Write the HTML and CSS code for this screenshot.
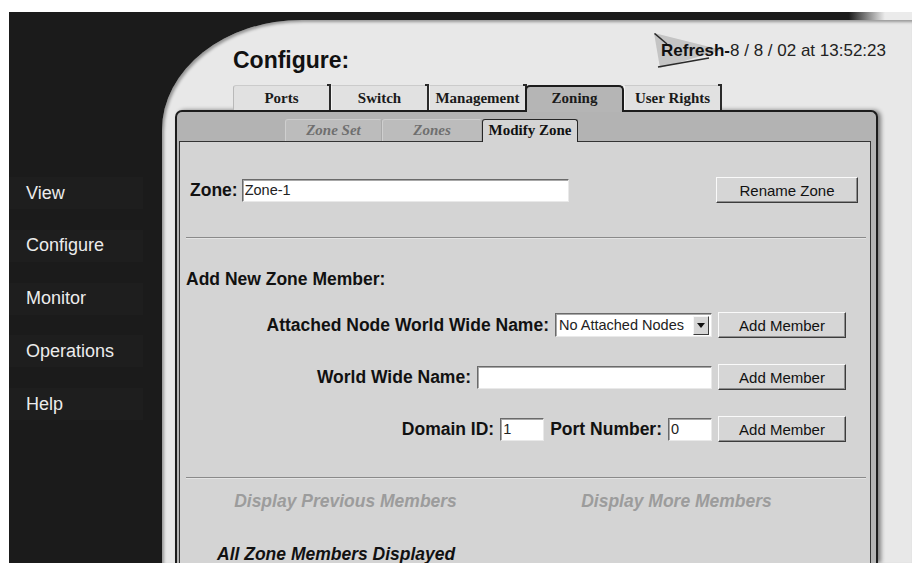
FILE: index.html
```html
<!DOCTYPE html>
<html lang="en">
<head>
<meta charset="utf-8">
<title>Configure - Zoning</title>
<link rel="stylesheet" href="styles.css">
</head>
<body>
<div class="frame">
  <nav class="sidebar">
    <a class="nav-item">View</a>
    <a class="nav-item">Configure</a>
    <a class="nav-item">Monitor</a>
    <a class="nav-item">Operations</a>
    <a class="nav-item">Help</a>
  </nav>

  <main class="main">
    <header class="header">
      <h1 class="title">Configure:</h1>
      <div class="refresh">
        <svg class="refresh-wedge" width="70" height="36" viewBox="0 0 70 36">
          <polygon points="0,0 68,17 6,35" fill="#c4c4c4"/>
          <line x1="0.5" y1="0.5" x2="13" y2="11" stroke="#2a2a2a" stroke-width="1.6"/>
          <line x1="4" y1="34" x2="55" y2="25" stroke="#2a2a2a" stroke-width="1.6"/>
        </svg>
        <span class="refresh-label">Refresh-</span><span class="refresh-time">8 / 8 / 02 at 13:52:23</span>
      </div>
    </header>

    <div class="tabs">
      <div class="tab first">Ports</div>
      <div class="tab">Switch</div>
      <div class="tab">Management</div>
      <div class="tab active">Zoning</div>
      <div class="tab">User Rights</div>
    </div>

    <section class="panel">
      <div class="subtabs">
        <div class="subtab set">Zone Set</div>
        <div class="subtab zones">Zones</div>
        <div class="subtab active">Modify Zone</div>
      </div>

      <div class="content">
        <div class="zone-row">
          <label class="label" for="zone-name">Zone:</label>
          <input id="zone-name" class="field zone-field" type="text" value="Zone-1">
          <button class="btn rename">Rename Zone</button>
        </div>

        <div class="rule"></div>

        <h2 class="section-title">Add New Zone Member:</h2>

        <div class="member-rows">
          <div class="member-row">
            <span class="label">Attached Node World Wide Name:</span>
            <div class="select">
              <span class="select-value">No Attached Nodes</span>
              <span class="select-arrow">
                <svg width="8" height="5" viewBox="0 0 8 5"><polygon points="0,0 8,0 4,5" fill="#111"/></svg>
              </span>
            </div>
            <button class="btn add">Add Member</button>
          </div>
          <div class="member-row">
            <span class="label">World Wide Name:</span>
            <input class="field wwn-field" type="text" value="">
            <button class="btn add">Add Member</button>
          </div>
          <div class="member-row">
            <span class="label">Domain ID:</span>
            <input class="field small-field" type="text" value="1">
            <span class="label">Port Number:</span>
            <input class="field small-field" type="text" value="0">
            <button class="btn add">Add Member</button>
          </div>
        </div>

        <div class="rule lower"></div>

        <div class="pager">
          <span class="pager-link">Display Previous Members</span>
          <span class="pager-link">Display More Members</span>
        </div>

        <p class="status">All Zone Members Displayed</p>
      </div>
    </section>
  </main>
</div>
</body>
</html>
```
FILE: styles.css
```css
* {
  box-sizing: border-box;
}

html,
body {
  margin: 0;
  padding: 0;
  background: #ffffff;
  overflow: hidden;
}

body {
  font-family: "Liberation Sans", Arial, sans-serif;
  color: #111;
}

/* Dark shell: left navigation column plus the thin bar across the top */
.frame {
  margin: 12px 0 0 9px;
  height: 551px;
  display: flex;
  overflow: hidden;
  background: linear-gradient(to right, #1b1b1b 0%, #1b1b1b 93%, #ebebeb 97%);
}

.sidebar {
  width: 153px;
  flex: none;
  display: flex;
  flex-direction: column;
  gap: 20.75px;
  padding-top: 165px;
}

.nav-item {
  display: flex;
  align-items: center;
  width: 134px;
  height: 32px;
  padding-left: 17px;
  background: #1e1e1e;
  color: #ececec;
  font-size: 18px;
  cursor: pointer;
}

/* Light work area with the large rounded shoulder */
.main {
  flex: 1;
  min-width: 0;
  margin-top: 8px;
  display: flex;
  flex-direction: column;
  padding: 0 34px 0 13px;
  background: #e8e8e8;
  border-top-left-radius: 140px 110px;
  box-shadow: inset 2px 2px 3px rgba(0, 0, 0, 0.35);
}

.header {
  height: 65px;
  flex: none;
  display: flex;
  justify-content: space-between;
  align-items: flex-start;
  padding-left: 58px;
  margin-right: -8px;
}

.title {
  margin: 0;
  padding-top: 27px;
  font-size: 23px;
  line-height: 26px;
  font-weight: 700;
  color: #111;
}

.refresh {
  position: relative;
  margin-top: 13px;
  padding: 8px 0 0 7px;
  font-size: 17px;
  line-height: 20px;
  white-space: nowrap;
}

.refresh-wedge {
  position: absolute;
  left: 0;
  top: 0;
}

.refresh-label {
  position: relative;
  font-weight: 700;
  color: #111;
}

.refresh-time {
  position: relative;
  color: #222;
}

/* Main tab strip */
.tabs {
  flex: none;
  display: flex;
  align-items: flex-start;
  height: 25px;
  padding-left: 58px;
  position: relative;
  z-index: 2;
}

.tab {
  position: relative;
  width: 98px;
  height: 25px;
  display: flex;
  align-items: center;
  justify-content: center;
  background: #e1e1e1;
  border-top: 1px solid #cbcbcb;
  border-left: 1px solid #f4f4f4;
  border-right: 2px solid #2a2a2a;
  font-family: "Liberation Serif", "Times New Roman", serif;
  font-weight: 700;
  font-size: 15px;
  color: #1a1a1a;
}

/* small hook where each divider meets the top edge */
.tab:not(.active)::after {
  content: "";
  position: absolute;
  right: -2px;
  top: -2px;
  width: 4px;
  height: 2px;
  background: #2a2a2a;
}

.tab.first {
  border-left: 1px solid #b9b9b9;
  border-top-left-radius: 3px;
}

.tab.active {
  width: 99px;
  height: 27px;
  margin-left: -2px;
  background: #b5b5b5;
  border: 2px solid #1c1c1c;
  border-bottom: none;
  border-radius: 5px 5px 0 0;
  padding-bottom: 2px;
}

/* Tab body */
.panel {
  flex: 1;
  display: flex;
  flex-direction: column;
  min-height: 0;
  background: #b3b3b3;
  border: 2px solid #1c1c1c;
  border-bottom: none;
  border-radius: 7px 7px 0 0;
  padding: 0 5px 0 2px;
  box-shadow: 3px 0 4px rgba(0, 0, 0, 0.45);
}

.subtabs {
  flex: none;
  height: 29px;
  display: flex;
  align-items: flex-start;
  padding: 7px 0 0 106px;
  position: relative;
  z-index: 1;
}

.subtab {
  height: 22px;
  display: flex;
  align-items: center;
  justify-content: center;
  background: #bcbcbc;
  border-top: 1px solid #cdcdcd;
  border-left: 1px solid #cfcfcf;
  border-right: 1px solid #a9a9a9;
  border-radius: 3px 3px 0 0;
  font-family: "Liberation Serif", "Times New Roman", serif;
  font-weight: 700;
  font-style: italic;
  font-size: 15px;
  color: #6f6f6f;
}

.subtab.set {
  width: 97px;
}

.subtab.zones {
  width: 100px;
}

.subtab.active {
  width: 96px;
  height: 23px;
  background: #d4d4d4;
  border: 1px solid #262626;
  border-bottom: none;
  font-style: normal;
  color: #111;
  padding-bottom: 1px;
}

.content {
  flex: 1;
  background: #d4d4d4;
  border: 1px solid #333;
  border-bottom: none;
}

.label {
  font-size: 17.5px;
  font-weight: 700;
  color: #111;
  white-space: nowrap;
}

.zone-row {
  display: flex;
  align-items: center;
  height: 26px;
  margin-top: 35px;
  padding: 0 12px 0 10px;
}

.zone-row .label {
  margin-right: 4px;
}

.field {
  height: 23px;
  padding: 0 2px;
  background: #fff;
  border: 1px solid;
  border-color: #6a6a6a #e9e9e9 #e9e9e9 #6a6a6a;
  box-shadow: inset 1px 1px 0 #a8a8a8;
  font-family: "Liberation Sans", Arial, sans-serif;
  font-size: 14.5px;
  color: #222;
  outline: none;
}

.zone-field {
  width: 327px;
}

.wwn-field {
  width: 235px;
}

.small-field {
  width: 44px;
}

.btn {
  height: 26px;
  padding: 0;
  background: #d6d6d6;
  border: 1px solid;
  border-color: #fafafa #3c3c3c #3c3c3c #fafafa;
  box-shadow: inset -1px -1px 0 #8e8e8e;
  font-family: "Liberation Sans", Arial, sans-serif;
  font-size: 15px;
  color: #111;
}

.btn.rename {
  width: 142px;
  margin-left: auto;
}

.btn.add {
  width: 128px;
}

.rule {
  height: 2px;
  margin: 34px 4px 0 6px;
  border-top: 1px solid #8a8a8a;
  border-bottom: 1px solid #e4e4e4;
}

.rule.lower {
  margin-top: 35px;
}

.section-title {
  margin: 30px 0 0 6px;
  font-size: 17.5px;
  line-height: 20px;
  font-weight: 700;
  color: #111;
}

.member-rows {
  margin-top: 23px;
  display: flex;
  flex-direction: column;
  gap: 26px;
  padding-right: 24px;
}

.member-row {
  display: flex;
  justify-content: flex-end;
  align-items: center;
  gap: 6px;
  height: 26px;
}

.select {
  width: 157px;
  height: 24px;
  display: flex;
  align-items: center;
  background: #fff;
  border: 1px solid;
  border-color: #6a6a6a #e9e9e9 #e9e9e9 #6a6a6a;
  box-shadow: inset 1px 1px 0 #a8a8a8;
  padding: 1px 2px 1px 3px;
}

.select-value {
  flex: 1;
  font-size: 14.5px;
  color: #222;
  white-space: nowrap;
}

.select-arrow {
  width: 16px;
  height: 19px;
  display: flex;
  align-items: center;
  justify-content: center;
  background: #d6d6d6;
  border: 1px solid;
  border-color: #f6f6f6 #3c3c3c #3c3c3c #f6f6f6;
}

.pager {
  margin-top: 12px;
  display: grid;
  grid-template-columns: 1fr 1fr;
  padding-right: 28px;
  text-align: center;
  font-size: 17.5px;
  line-height: 20px;
  font-weight: 700;
  font-style: italic;
  color: #9c9c9c;
}

.status {
  margin: 33px 0 0;
  padding-left: 37px;
  font-size: 17.5px;
  line-height: 20px;
  font-weight: 700;
  font-style: italic;
  color: #111;
}
```
